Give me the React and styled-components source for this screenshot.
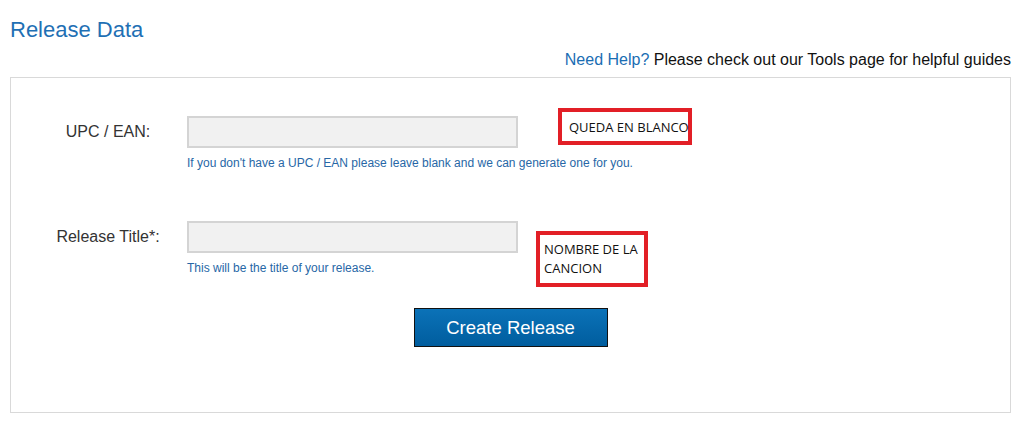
import React from "react";
import styled, { createGlobalStyle } from "styled-components";

const Global = createGlobalStyle`
  html, body { margin: 0; padding: 0; background: #ffffff; }
  body { font-family: Arial, "Liberation Sans", Helvetica, sans-serif; color: #333333; }
  * { box-sizing: border-box; }
`;

const Page = styled.div`
  width: 1023px;
  padding: 17px 12px 0 10px;
`;

const Title = styled.h2`
  margin: 0;
  font-size: 22px;
  line-height: 25px;
  font-weight: normal;
  color: #1f70b4;
`;

const HelpLine = styled.div`
  margin-top: 9px;
  font-size: 16px;
  line-height: 18px;
  text-align: right;
  color: #111111;
`;

const HelpLink = styled.span`
  color: #1a6db3;
`;

const Panel = styled.div`
  margin-top: 8px;
  border: 1px solid #d9d9d9;
  padding: 38px 0 65px 0;
  display: flex;
  flex-direction: column;
`;

const Row = styled.div`
  display: flex;
  align-items: flex-start;
  padding-left: 29px;
  margin-bottom: ${(p) => p.$gap || 0}px;
`;

const Label = styled.label`
  width: 136px;
  margin-right: 11px;
  font-size: 16px;
  line-height: 32px;
  text-align: center;
  color: #333333;
`;

const Field = styled.div`
  display: flex;
  flex-direction: column;
  width: 331px;
`;

const Input = styled.input`
  width: 331px;
  height: 32px;
  border: 2px solid #d4d4d4;
  background: #f1f1f1;
  outline: none;
  font-size: 14px;
  padding: 0 6px;
`;

const Hint = styled.div`
  margin-top: 9px;
  font-size: 12px;
  line-height: 13px;
  color: #2767a6;
  white-space: nowrap;
`;

const Note = styled.div`
  margin-left: ${(p) => p.$dx}px;
  margin-top: ${(p) => p.$dy}px;
  margin-bottom: ${(p) => -(p.$dy + p.$h)}px;
  width: ${(p) => p.$w}px;
  height: ${(p) => p.$h}px;
  flex-shrink: 0;
  border: 4px solid #e21f26;
  padding: ${(p) => p.$pt}px 0 0 ${(p) => p.$pl}px;
  font-family: "Open Sans", "Noto Sans", sans-serif;
  font-size: 13px;
  line-height: 19px;
  color: #111111;
  white-space: ${(p) => (p.$wrap ? "normal" : "nowrap")};
`;

const ButtonRow = styled.div`
  display: flex;
  justify-content: center;
`;

const Button = styled.button`
  width: 194px;
  height: 39px;
  border: 1px solid #111111;
  background: linear-gradient(#0b72b8, #005d9e);
  color: #ffffff;
  font-family: Arial, "Liberation Sans", sans-serif;
  font-size: 18.5px;
  padding: 0;
  cursor: pointer;
`;

export default function App() {
  return (
    <>
      <Global />
      <Page>
        <Title>Release Data</Title>
        <HelpLine>
          <HelpLink>Need Help?</HelpLink> Please check out our Tools page for helpful guides
        </HelpLine>
        <Panel>
          <Row $gap={51}>
            <Label>UPC / EAN:</Label>
            <Field>
              <Input type="text" />
              <Hint>If you don't have a UPC / EAN please leave blank and we can generate one for you.</Hint>
            </Field>
            <Note $dx={40} $dy={-8} $w={134} $h={37} $pt={6} $pl={7}>QUEDA EN BLANCO</Note>
          </Row>
          <Row $gap={33}>
            <Label>Release Title*:</Label>
            <Field>
              <Input type="text" />
              <Hint>This will be the title of your release.</Hint>
            </Field>
            <Note $dx={18} $dy={10} $w={112} $h={56} $pt={5} $pl={4} $wrap>NOMBRE DE LA CANCION</Note>
          </Row>
          <ButtonRow>
            <Button>Create Release</Button>
          </ButtonRow>
        </Panel>
      </Page>
    </>
  );
}
